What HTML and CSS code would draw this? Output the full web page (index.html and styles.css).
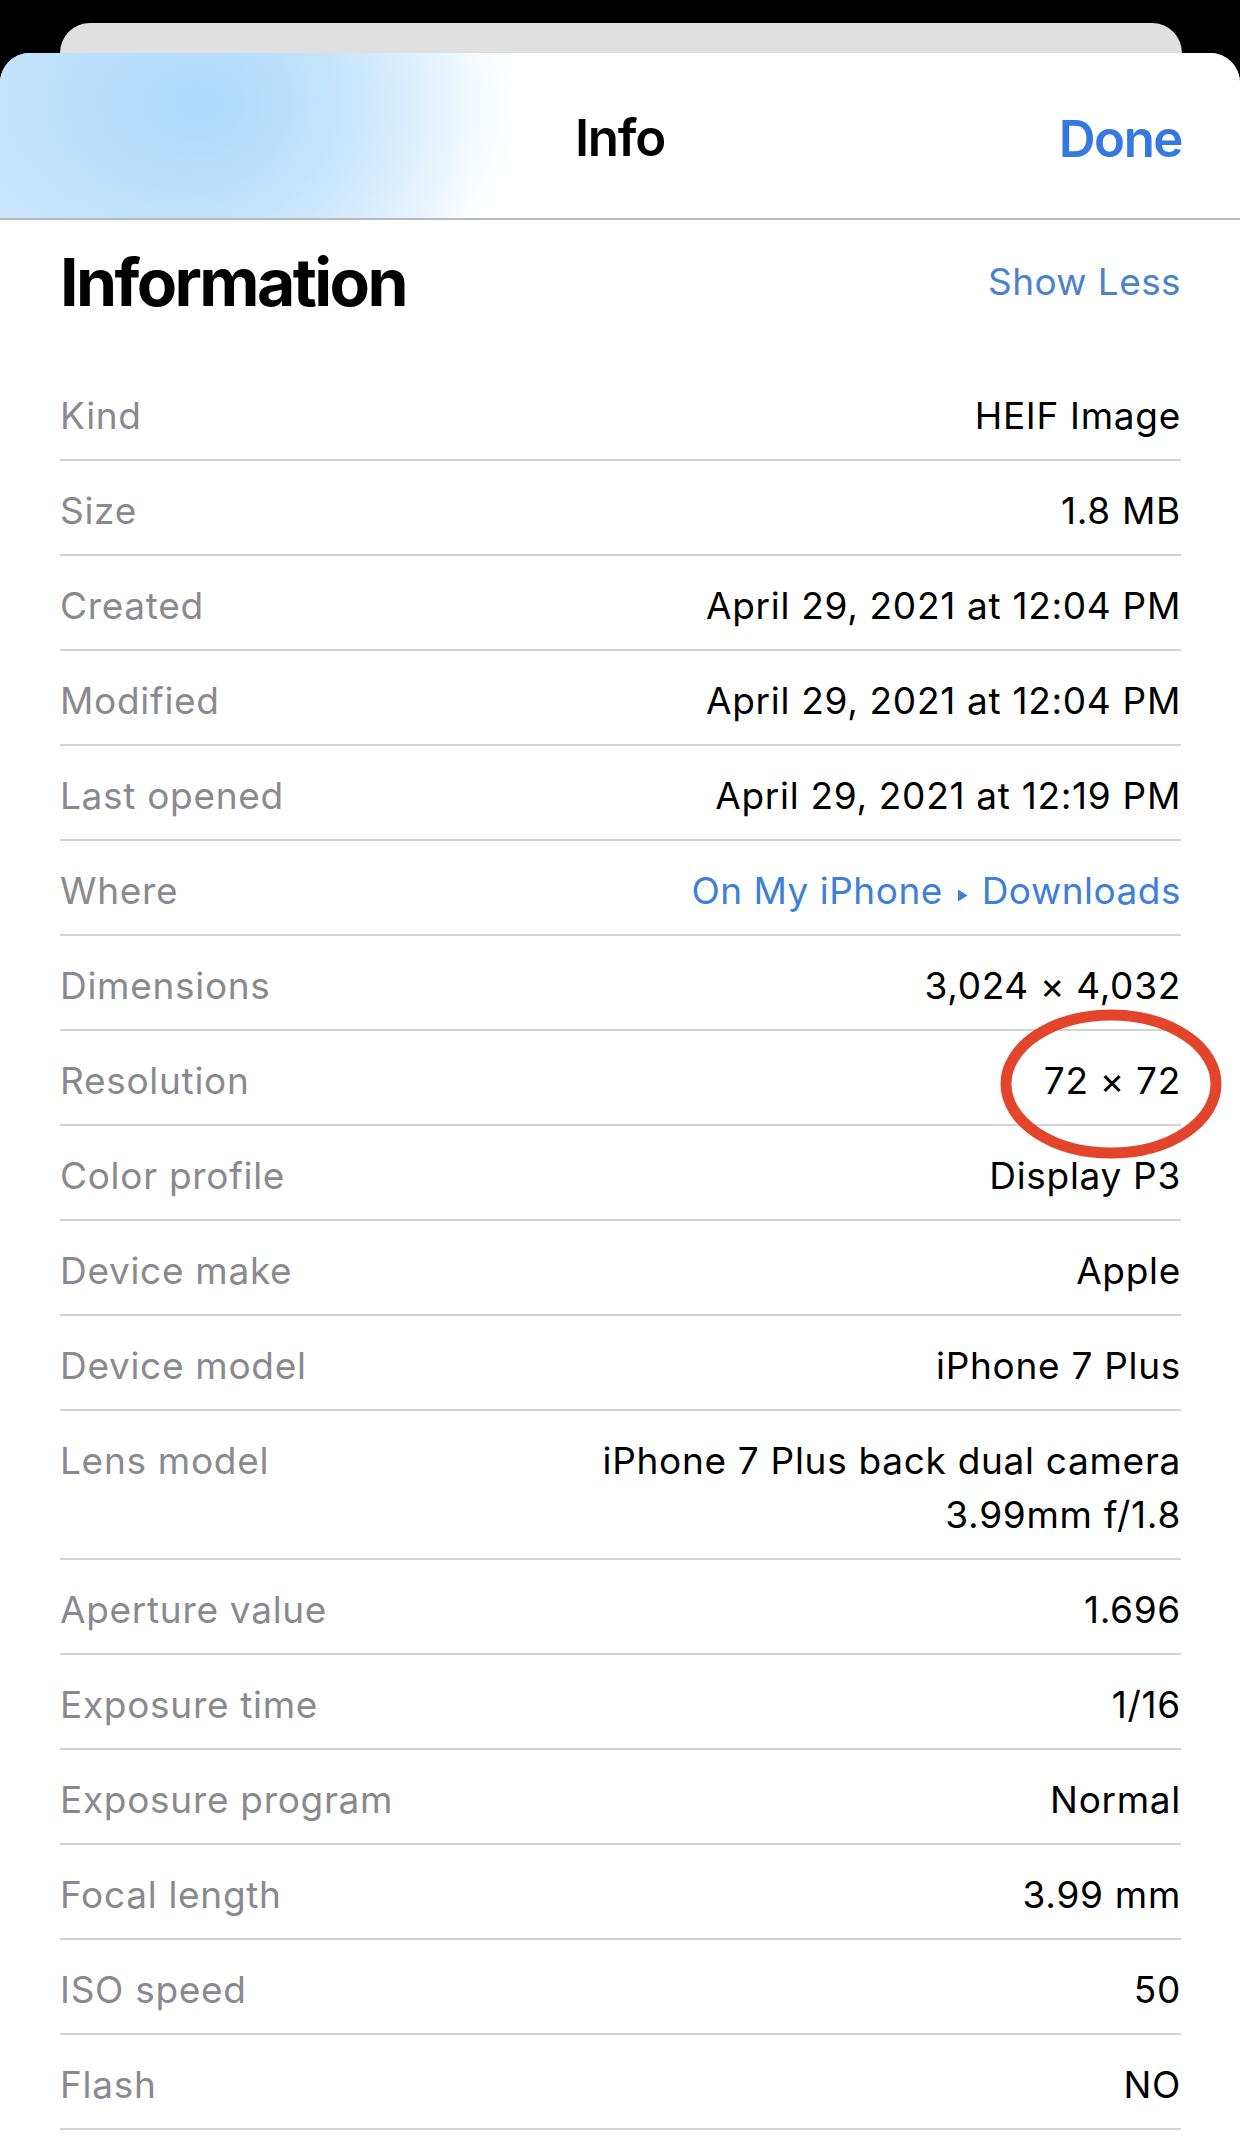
FILE: index.html
```html
<!DOCTYPE html>
<html lang="en">
  <head>
    <meta charset="UTF-8" />
    <meta name="viewport" content="width=device-width, initial-scale=1.0" />
    <title>Info</title>
    <link rel="stylesheet" href="styles.css">
  </head>
  <body>
    <div class="back-card"></div>
    <div class="sheet">
      <div class="nav">
        <span class="nav-title">Info</span>
        <a class="nav-done" href="#">Done</a>
      </div>
      <div class="content">
        <div class="section-head">
          <h2>Information</h2>
          <a class="show-less" href="#">Show Less</a>
        </div>
        <div class="row"><span class="label">Kind</span><span class="value">HEIF Image</span></div>
        <div class="row"><span class="label">Size</span><span class="value">1.8 MB</span></div>
        <div class="row"><span class="label">Created</span><span class="value">April 29, 2021 at 12:04 PM</span></div>
        <div class="row"><span class="label">Modified</span><span class="value">April 29, 2021 at 12:04 PM</span></div>
        <div class="row"><span class="label">Last opened</span><span class="value">April 29, 2021 at 12:19 PM</span></div>
        <div class="row">
          <span class="label">Where</span>
          <span class="value link">On My iPhone
            <svg class="crumb" width="11" height="13" viewBox="0 0 11 13"><path d="M1 0.5 L10.5 6.5 L1 12.5 Z" fill="#3d7fd9"/></svg>
            Downloads</span>
        </div>
        <div class="row"><span class="label">Dimensions</span><span class="value">3,024 × 4,032</span></div>
        <div class="row">
          <span class="label">Resolution</span><span class="value">72 × 72</span>
          <!-- red marker drawn over the screenshot -->
          <svg class="marker" width="232" height="160" viewBox="0 0 232 160">
            <ellipse cx="116" cy="80" rx="105" ry="69" fill="none" stroke="#e2452b" stroke-width="11"/>
          </svg>
        </div>
        <div class="row"><span class="label">Color profile</span><span class="value">Display P3</span></div>
        <div class="row"><span class="label">Device make</span><span class="value">Apple</span></div>
        <div class="row"><span class="label">Device model</span><span class="value">iPhone 7 Plus</span></div>
        <div class="row"><span class="label">Lens model</span><span class="value">iPhone 7 Plus back dual camera<br>3.99mm f/1.8</span></div>
        <div class="row"><span class="label">Aperture value</span><span class="value">1.696</span></div>
        <div class="row"><span class="label">Exposure time</span><span class="value">1/16</span></div>
        <div class="row"><span class="label">Exposure program</span><span class="value">Normal</span></div>
        <div class="row"><span class="label">Focal length</span><span class="value">3.99 mm</span></div>
        <div class="row"><span class="label">ISO speed</span><span class="value">50</span></div>
        <div class="row"><span class="label">Flash</span><span class="value">NO</span></div>
      </div>
    </div>
  </body>
</html>
```

FILE: styles.css
```css
html {
  box-sizing: border-box;
  font-family: Inter, "Liberation Sans", Arial, sans-serif;
  color: #000;
  background-color: #000;
}
body {
  margin: 0;
  background: #000;
  overflow: hidden;
}
a {
  text-decoration: none;
}
.back-card {
  margin: 23px 58px 0 60px;
  height: 30px;
  background: #e0e0e0;
  border-radius: 30px 30px 0 0;
}
.sheet {
  background: #fff;
  border-radius: 30px 30px 0 0;
  min-height: 2100px;
  overflow: hidden;
}
.nav {
  height: 167px;
  border-bottom: 2px solid #b9b9bb;
  display: flex;
  align-items: center;
  justify-content: center;
  position: relative;
  padding-top: 4px;
  box-sizing: border-box;
  background:
    radial-gradient(ellipse 320px 240px at 200px 50px, rgba(168, 215, 251, 0.9) 0%, rgba(176, 219, 251, 0.55) 50%, rgba(200, 230, 252, 0) 100%),
    linear-gradient(to right, #d0e8fc 0, #d8ecfc 220px, #ecf6fe 360px, #ffffff 470px);
}
.nav-title {
  font-size: 51px;
  font-weight: 600;
  letter-spacing: -1.2px;
}
.nav-done {
  position: absolute;
  right: 58px;
  top: 50%;
  transform: translateY(-46%);
  font-size: 51px;
  font-weight: 600;
  color: #3478e0;
  letter-spacing: -1.5px;
}
.content {
  padding: 0 59px 0 60px;
}
.section-head {
  display: flex;
  justify-content: space-between;
  align-items: center;
  padding: 22px 0 44px;
}
.section-head h2 {
  margin: 0;
  font-size: 66px;
  line-height: 80px;
  font-weight: 700;
  letter-spacing: -2.6px;
}
.show-less {
  font-size: 37px;
  line-height: 54px;
  color: #4a82cc;
  letter-spacing: 0.4px;
}
.row {
  position: relative;
  display: flex;
  justify-content: space-between;
  align-items: flex-start;
  padding: 23px 0 16px;
  border-bottom: 2px solid #d2d2d4;
  font-size: 37px;
  line-height: 54px;
}
.label {
  color: #8a8a8e;
  white-space: nowrap;
  letter-spacing: 0.7px;
}
.value {
  text-align: right;
  color: #000;
  letter-spacing: 0.7px;
}
.link {
  color: #3d7fd9;
  letter-spacing: 0.5px;
}
.crumb {
  margin: 0 3px;
  vertical-align: 2px;
}
.marker {
  position: absolute;
  left: 935px;
  top: -27px;
}
```
